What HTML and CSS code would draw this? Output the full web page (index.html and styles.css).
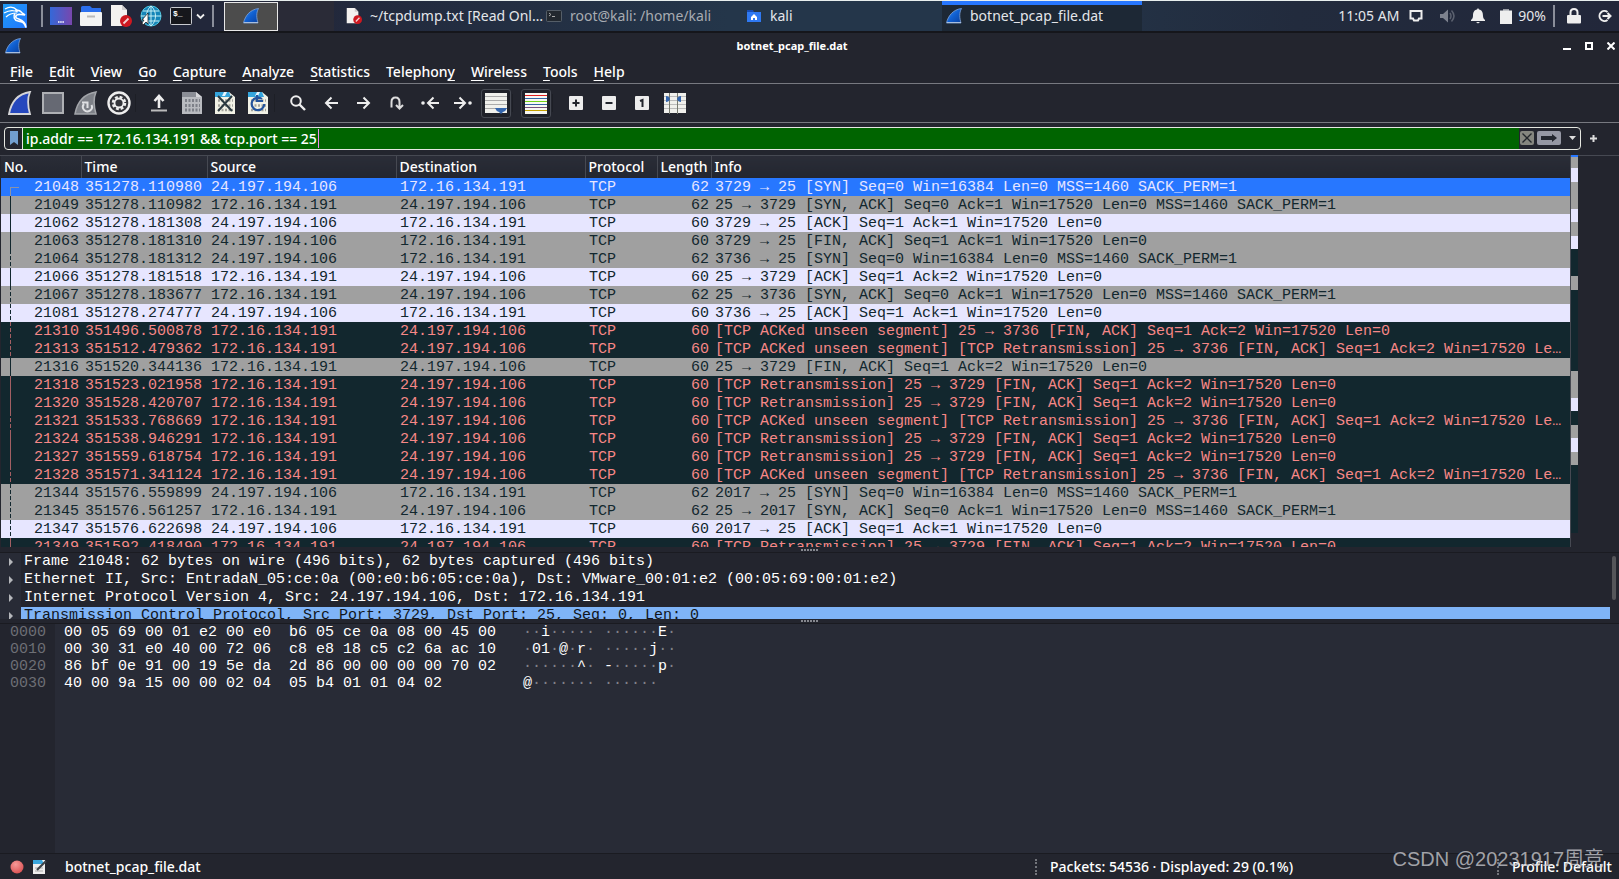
FILE: index.html
```html
<!DOCTYPE html>
<html lang="en">
<head>
<meta charset="utf-8">
<title>botnet_pcap_file.dat</title>
<link rel="stylesheet" href="styles.css">
</head>
<body>
<svg class="defs" aria-hidden="true">
  <defs>
    <linearGradient id="blue" x1="0" y1="0" x2="1" y2="1"><stop offset="0" stop-color="#3d8df0"/><stop offset=".5" stop-color="#0f5fd0"/><stop offset="1" stop-color="#0b3f9c"/></linearGradient>
    <linearGradient id="desk" x1="0" y1="0" x2="1" y2="0"><stop offset="0" stop-color="#3468d8"/><stop offset="1" stop-color="#7847ae"/></linearGradient>
    <linearGradient id="kali" x1="0" y1="0" x2="1" y2="1"><stop offset="0" stop-color="#1e9bf5"/><stop offset="1" stop-color="#2277ff"/></linearGradient>
    <radialGradient id="red" cx=".4" cy=".3" r=".8"><stop offset="0" stop-color="#f59a98"/><stop offset="1" stop-color="#d84a4c"/></radialGradient>
    <symbol id="fin" viewBox="0 0 16 16"><path d="M.5 15C2 8 7 1.500 15.500.500 13 5 13.500 10 15 15z" fill="url(#blue)" stroke="#7fa3d8" stroke-width=".8"/><path d="M1 14.500h14" stroke="#a9bedd"/></symbol>
    <symbol id="nofile" viewBox="0 0 22 22"><path d="M1 0h11l5 5v16H1z" fill="#f4f2f0"/><path d="M12 0v5h5z" fill="#d0cece"/><circle cx="16" cy="16" r="6" fill="#cf1820"/><path d="M13.500 18.500l5-5" stroke="#f3d2d2" stroke-width="1.800"/></symbol>
    <symbol id="page" viewBox="0 0 22 24"><path d="M1 1h14l6 5v17H1z" fill="#f2f2e6"/><path d="M1 1h14l2 5H1z" fill="#35a5dc"/><path d="M10 1h3L11 5H8z" fill="#e8f6ff"/><path d="M4 9.500h15M4 14.500h15M4 19h15" stroke="#a4a49c" stroke-width="2.500" stroke-dasharray="2 1.500"/></symbol>
  </defs>
</svg>

<header class="panel">
  <button class="kali" aria-label="Applications"><svg width="24" height="24" viewBox="0 0 24 24"><rect width="24" height="24" fill="url(#kali)"/><path d="M2 5c5-3 9-2 12 1M1 9c5-3 10-3 14-1M3 13c3-3 7-4 11-4" fill="none" stroke="#fff" stroke-width="1.200"/><path d="M12 6c4 0 6 1 7 3l3 2-4-.5c-3-.5-6 .5-5 3 1 2.500 9 .5 10 10-2-6-5-6-8-6.500-4-.8-5-5-3-7.500" fill="none" stroke="#fff" stroke-width="1.600"/></svg></button>
  <span class="divider"></span>
  <nav class="launchers" aria-label="Launchers">
    <button aria-label="Show desktop"><svg width="22" height="18"><rect width="22" height="18" fill="url(#desk)"/><path d="M8 15h6" stroke="#fff" stroke-width="1.500" stroke-dasharray="1.500 .7"/></svg></button>
    <button aria-label="Files"><svg width="22" height="20"><path d="M1 7V1.500Q1 0 2.500 0H10l2 2h8.500Q21 2 21 3v5z" fill="#2b6fee"/><rect y="6" width="22" height="14" rx="1" fill="#f3f3f3"/><path d="M7 10.500h8" stroke="#b9b9b9" stroke-width="2"/></svg></button>
    <button aria-label="Text editor"><svg width="22" height="22"><use href="#nofile"/></svg></button>
    <button aria-label="Web browser"><svg width="22" height="22" viewBox="0 0 22 22"><circle cx="11" cy="11" r="10" fill="#1585b8" stroke="#4fc8e2"/><path d="M1 11h20M3 6h16M3 16h16M11 1v20M11 1c-6 5-6 15 0 20M11 1c6 5 6 15 0 20" fill="none" stroke="#c4eff5"/><path d="M8 8v11l-2-2-3 3-1-2 2-3H2z" fill="#fff" stroke="#111" stroke-width=".7"/></svg></button>
    <button aria-label="Terminal"><svg width="22" height="18"><rect x=".5" y=".5" width="21" height="17" rx="1" fill="#16171c" stroke="#c9cbd0"/><text x="3" y="9" class="prompt">$_</text></svg></button>
  </nav>
  <button class="more" aria-label="More terminals"><svg width="9" height="7"><path d="M1 1.500l3.500 3.500L8 1.500" fill="none" stroke="#eee" stroke-width="1.800"/></svg></button>
  <span class="divider"></span>
  <button class="workspace" aria-label="Workspace 1"><svg width="16" height="16"><use href="#fin"/></svg></button>
  <span class="workspace-rest"></span>
  <nav class="tasks" aria-label="Windows">
    <button class="task"><svg width="16" height="16"><use href="#nofile"/></svg><span>~/tcpdump.txt [Read Onl…</span></button>
    <button class="task dim"><svg width="16" height="12"><rect x=".5" y=".5" width="15" height="11" rx="1" fill="#22282f" stroke="#555e68"/><path d="M3 3l2 1.500L3 6M6 6.500h3" fill="none" stroke="#aaa"/></svg><span>root@kali: /home/kali</span></button>
    <button class="task"><svg width="16" height="12"><path d="M1 2V0h6l1 2z" fill="#174cb5"/><path d="M1 2h14v10H1z" fill="#2f79f3"/><path d="M8 4l3 3v3H9V8H7v2H5V7z" fill="#fff"/></svg><span>kali</span></button>
    <button class="task active"><svg width="16" height="16"><use href="#fin"/></svg><span>botnet_pcap_file.dat</span></button>
  </nav>
  <div class="tray">
    <time>11:05 AM</time>
    <svg class="t-net" width="14" height="14"><path d="M1.500 2h11v7.500H10l-1 2H5l-1-2H1.500z" fill="none" stroke="#eee" stroke-width="2"/></svg>
    <svg class="t-vol" width="16" height="16"><path d="M0 6h3l5-4.500v13L3 10H0z" fill="#7d828e"/><path d="M10 5q2 3 0 6M11.500 2.500q5 5.500 0 11" fill="none" stroke="#5b616f" stroke-width="1.500"/></svg>
    <svg class="t-bell" width="14" height="16"><path d="M7 0l1 1.500c3 .5 4 3 4 6.500 0 2 1 3 2 4v1H0v-1c1-1 2-2 2-4 0-3.500 1-6 4-6.500zM5 14h4l-2 1.500z" fill="#eee"/></svg>
    <svg class="t-bat" width="12" height="16"><path d="M3 1h6v1.500h3V16H0V2.500h3z" fill="#eee"/><path d="M3 1h6v1.500H3z" fill="#999ca4"/></svg>
    <span class="pct">90%</span>
    <span class="divider"></span>
    <button class="t-lock" aria-label="Lock"><svg width="14" height="16"><path d="M3.500 8V4.500q0-3.500 3.500-3.500t3.500 3.500V8" fill="none" stroke="#eee" stroke-width="2"/><rect y="7" width="14" height="8.500" rx="1" fill="#eee"/></svg></button>
    <button aria-label="Log out"><svg width="15" height="14"><path d="M10.500 3A5 5 0 1 0 10.500 11M5.500 7h8M10.500 4l3 3-3 3" fill="none" stroke="#eee" stroke-width="2"/></svg></button>
  </div>
</header>

<main class="window">
  <div class="titlebar">
    <svg width="16" height="16"><use href="#fin"/></svg>
    <h1>botnet_pcap_file.dat</h1>
    <div class="controls">
      <button aria-label="Minimize"><svg width="8" height="8"><path d="M0 7h8" stroke="#fff" stroke-width="2"/></svg></button>
      <button aria-label="Maximize"><svg width="8" height="8"><rect x="1" y="1" width="6" height="6" fill="none" stroke="#fff" stroke-width="2"/></svg></button>
      <button aria-label="Close"><svg width="8" height="8"><path d="M.5.500l7 7M7.500.500l-7 7" stroke="#fff" stroke-width="2"/></svg></button>
    </div>
  </div>

  <nav class="menubar" aria-label="Menu">
    <button><u>F</u>ile</button><button><u>E</u>dit</button><button><u>V</u>iew</button><button><u>G</u>o</button><button><u>C</u>apture</button><button><u>A</u>nalyze</button><button><u>S</u>tatistics</button><button>Telephon<u>y</u></button><button><u>W</u>ireless</button><button><u>T</u>ools</button><button><u>H</u>elp</button>
  </nav>

  <div class="toolbar" role="toolbar" aria-label="Main toolbar">
    <button aria-label="Start capture"><svg width="24" height="24" viewBox="0 0 24 24"><path d="M1 23C3 12 9 3 22 1 19 8 20 16 22 23z" fill="#2547bd" stroke="#d5d5d8" stroke-width="1.800"/></svg></button>
    <button aria-label="Stop capture"><svg width="22" height="22"><rect x="1" y="1" width="20" height="20" fill="#666973" stroke="#aeb0b4" stroke-width="2"/></svg></button>
    <button aria-label="Restart capture"><svg width="24" height="24" viewBox="0 0 24 24"><path d="M1 23C3 12 9 3 22 1 19 8 20 16 22 23z" fill="#7d8087" stroke="#a3a5aa" stroke-width="1.500"/><path d="M10 13a4.500 4.500 0 1 0 7.500 1M8 11.500h5.500V17" fill="none" stroke="#dfe0e3" stroke-width="2"/></svg></button>
    <button aria-label="Capture options"><svg width="24" height="24" viewBox="0 0 24 24"><circle cx="12" cy="12" r="10.500" fill="#33343a" stroke="#eee" stroke-width="2.400"/><circle cx="12" cy="12" r="6" fill="none" stroke="#eee" stroke-width="2.500" stroke-dasharray="2.800 1.900"/><circle cx="12" cy="12" r="4.500" fill="#33343a" stroke="#eee" stroke-width="1.800"/></svg></button>
    <span class="sep"></span>
    <button aria-label="Open"><svg width="16" height="18"><path d="M8 14V3M3.500 7L8 2l4.500 5" fill="none" stroke="#eee" stroke-width="2.600"/><path d="M0 16.500h16" stroke="#bbb" stroke-width="2"/></svg></button>
    <button aria-label="Save"><svg width="22" height="24" viewBox="0 0 22 24"><path d="M1 1h14l6 5v17H1z" fill="#b9bbc0"/><path d="M1 1h14l2 5H1z" fill="#8b8e96"/><path d="M15 1v5h6z" fill="#d6d7da"/><path d="M4 9.500h15M4 14.500h15M4 19h15" stroke="#7d8088" stroke-width="3" stroke-dasharray="2 1.500"/></svg></button>
    <button aria-label="Close file"><svg width="22" height="24"><use href="#page"/><path d="M4 5l14 15M18 5L4 20" stroke="#2b3a40" stroke-width="2"/></svg></button>
    <button aria-label="Reload"><svg width="22" height="24"><use href="#page"/><path d="M15 8A6.300 6.300 0 1 0 17.300 13M10 4v6h6" fill="none" stroke="#24549c" stroke-width="2.200"/></svg></button>
    <span class="sep"></span>
    <button aria-label="Find"><svg width="16" height="16"><circle cx="6" cy="6" r="4.800" fill="none" stroke="#eee" stroke-width="2"/><path d="M9.500 9.500l5.500 5.500" stroke="#eee" stroke-width="2.400"/></svg></button>
    <button aria-label="Back"><svg width="14" height="14"><path d="M14 7H2M7.500 1.500L2 7l5.500 5.500" fill="none" stroke="#eee" stroke-width="2"/></svg></button>
    <button aria-label="Forward"><svg width="14" height="14"><path d="M0 7h12M6.500 1.500L12 7l-5.500 5.500" fill="none" stroke="#eee" stroke-width="2"/></svg></button>
    <button aria-label="Go to packet"><svg width="14" height="14"><path d="M1.500 11.500V6q0-4.500 4-4.500t4 4.500v6M6 9l3.500 3.500L13 9" fill="none" stroke="#ddd" stroke-width="2"/></svg></button>
    <button aria-label="First packet"><svg width="18" height="14"><circle cx="2" cy="7" r="1.800" fill="#eee"/><path d="M18 7H8M12.500 1.500L7 7l5.500 5.500" fill="none" stroke="#eee" stroke-width="2"/></svg></button>
    <button aria-label="Last packet"><svg width="18" height="14"><circle cx="16" cy="7" r="1.800" fill="#eee"/><path d="M0 7h10M5.500 1.500L11 7l-5.500 5.500" fill="none" stroke="#eee" stroke-width="2"/></svg></button>
    <button class="on" aria-label="Auto scroll"><svg width="22" height="21"><path d="M0 0h22v20H0z" fill="#f0f0ec"/><path d="M0 3.500h22M0 7.500h22M0 11.500h22M0 15.500h22" stroke="#aaa"/><path d="M10 15h12q-1 3-4 4l-2 2-2-2q-3-1-4-4z" fill="#3566ad"/></svg></button>
    <span class="sep"></span>
    <button class="on" aria-label="Colorize"><svg width="22" height="21"><path d="M0 0h22v21H0z" fill="#f7f7f3"/><path d="M0 2.500h22" stroke="#e02020"/><path d="M0 5.500h22M0 11.500h22" stroke="#3465a4"/><path d="M0 8.500h22" stroke="#73d216"/><path d="M0 14.500h22" stroke="#75507b"/><path d="M0 17.500h22" stroke="#c4a000"/></svg></button>
    <span class="sep"></span>
    <button aria-label="Zoom in"><svg width="14" height="14"><rect width="14" height="14" rx="1" fill="#ededed"/><path d="M7 3.500v7M3.500 7h7" stroke="#22252d" stroke-width="2"/></svg></button>
    <button aria-label="Zoom out"><svg width="14" height="14"><rect width="14" height="14" rx="1" fill="#ededed"/><path d="M3.500 7h7" stroke="#22252d" stroke-width="2"/></svg></button>
    <button aria-label="Normal size"><svg width="14" height="14"><rect width="14" height="14" rx="1" fill="#ededed"/><path d="M5 5l2.500-1v7" fill="none" stroke="#22252d" stroke-width="2"/></svg></button>
    <button aria-label="Resize columns"><svg width="22" height="21"><path d="M0 0h22v20H0z" fill="#f0f0ec"/><path d="M0 3.500h22M0 7.500h22M0 11.500h22M0 15.500h22" stroke="#bbb"/><path d="M5.500 0v21M13.500 0v21" stroke="#777a70"/><path d="M2 3q3 0 4 3-1 3-4 3zM17 3q-3 0-4 3 1 3 4 3z" fill="#3566ad"/></svg></button>
  </div>

  <form class="filter">
    <div class="filter-box">
      <button type="button" class="bookmark" aria-label="Bookmarks"><svg width="8" height="14"><path d="M0 0h8v14l-4-3-4 3z" fill="#729fcf"/></svg></button>
      <div class="field"><input type="text" aria-label="Display filter" value="ip.addr == 172.16.134.191 &amp;&amp; tcp.port == 25"><i class="caret"></i></div>
      <button type="button" class="clear" aria-label="Clear"><svg width="14" height="14"><rect width="14" height="14" rx="2" fill="#85867f"/><path d="M2.500 2.500l9 9M11.500 2.500l-9 9" stroke="#22262b" stroke-width="1.300"/></svg></button>
      <button type="button" class="apply" aria-label="Apply"><svg width="24" height="14"><rect width="24" height="14" rx="2" fill="#9597a3"/><path d="M4 5h11V3l5 4-5 4V9H4z" fill="#23262e"/></svg></button>
      <button type="button" class="drop" aria-label="Recent filters"><svg width="7" height="4"><path d="M0 0h7L3.500 4z" fill="#ddd"/></svg></button>
    </div>
    <button type="button" class="add" aria-label="Add filter button"><svg width="7" height="7"><path d="M3.500 0v7M0 3.500h7" stroke="#ddd" stroke-width="2"/></svg></button>
  </form>

  <section class="packets">
    <div class="list">
      <table>
        <colgroup><col class="c-no"><col class="c-time"><col class="c-addr"><col class="c-addr"><col class="c-proto"><col class="c-len"><col></colgroup>
        <thead><tr><th>No.</th><th>Time</th><th>Source</th><th>Destination</th><th>Protocol</th><th>Length</th><th>Info</th></tr></thead>
        <tbody>
          <tr class="sel first"><td>21048</td><td>351278.110980</td><td>24.197.194.106</td><td>172.16.134.191</td><td>TCP</td><td>62</td><td>3729 → 25 [SYN] Seq=0 Win=16384 Len=0 MSS=1460 SACK_PERM=1</td></tr>
          <tr class="gray"><td>21049</td><td>351278.110982</td><td>172.16.134.191</td><td>24.197.194.106</td><td>TCP</td><td>62</td><td>25 → 3729 [SYN, ACK] Seq=0 Ack=1 Win=17520 Len=0 MSS=1460 SACK_PERM=1</td></tr>
          <tr class="pale"><td>21062</td><td>351278.181308</td><td>24.197.194.106</td><td>172.16.134.191</td><td>TCP</td><td>60</td><td>3729 → 25 [ACK] Seq=1 Ack=1 Win=17520 Len=0</td></tr>
          <tr class="gray"><td>21063</td><td>351278.181310</td><td>24.197.194.106</td><td>172.16.134.191</td><td>TCP</td><td>60</td><td>3729 → 25 [FIN, ACK] Seq=1 Ack=1 Win=17520 Len=0</td></tr>
          <tr class="gray other"><td>21064</td><td>351278.181312</td><td>24.197.194.106</td><td>172.16.134.191</td><td>TCP</td><td>62</td><td>3736 → 25 [SYN] Seq=0 Win=16384 Len=0 MSS=1460 SACK_PERM=1</td></tr>
          <tr class="pale"><td>21066</td><td>351278.181518</td><td>172.16.134.191</td><td>24.197.194.106</td><td>TCP</td><td>60</td><td>25 → 3729 [ACK] Seq=1 Ack=2 Win=17520 Len=0</td></tr>
          <tr class="gray other"><td>21067</td><td>351278.183677</td><td>172.16.134.191</td><td>24.197.194.106</td><td>TCP</td><td>62</td><td>25 → 3736 [SYN, ACK] Seq=0 Ack=1 Win=17520 Len=0 MSS=1460 SACK_PERM=1</td></tr>
          <tr class="pale other"><td>21081</td><td>351278.274777</td><td>24.197.194.106</td><td>172.16.134.191</td><td>TCP</td><td>60</td><td>3736 → 25 [ACK] Seq=1 Ack=1 Win=17520 Len=0</td></tr>
          <tr class="bad other"><td>21310</td><td>351496.500878</td><td>172.16.134.191</td><td>24.197.194.106</td><td>TCP</td><td>60</td><td>[TCP ACKed unseen segment] 25 → 3736 [FIN, ACK] Seq=1 Ack=2 Win=17520 Len=0</td></tr>
          <tr class="bad other"><td>21313</td><td>351512.479362</td><td>172.16.134.191</td><td>24.197.194.106</td><td>TCP</td><td>60</td><td>[TCP ACKed unseen segment] [TCP Retransmission] 25 → 3736 [FIN, ACK] Seq=1 Ack=2 Win=17520 Len=0</td></tr>
          <tr class="gray"><td>21316</td><td>351520.344136</td><td>172.16.134.191</td><td>24.197.194.106</td><td>TCP</td><td>60</td><td>25 → 3729 [FIN, ACK] Seq=1 Ack=2 Win=17520 Len=0</td></tr>
          <tr class="bad"><td>21318</td><td>351523.021958</td><td>172.16.134.191</td><td>24.197.194.106</td><td>TCP</td><td>60</td><td>[TCP Retransmission] 25 → 3729 [FIN, ACK] Seq=1 Ack=2 Win=17520 Len=0</td></tr>
          <tr class="bad"><td>21320</td><td>351528.420707</td><td>172.16.134.191</td><td>24.197.194.106</td><td>TCP</td><td>60</td><td>[TCP Retransmission] 25 → 3729 [FIN, ACK] Seq=1 Ack=2 Win=17520 Len=0</td></tr>
          <tr class="bad other"><td>21321</td><td>351533.768669</td><td>172.16.134.191</td><td>24.197.194.106</td><td>TCP</td><td>60</td><td>[TCP ACKed unseen segment] [TCP Retransmission] 25 → 3736 [FIN, ACK] Seq=1 Ack=2 Win=17520 Len=0</td></tr>
          <tr class="bad"><td>21324</td><td>351538.946291</td><td>172.16.134.191</td><td>24.197.194.106</td><td>TCP</td><td>60</td><td>[TCP Retransmission] 25 → 3729 [FIN, ACK] Seq=1 Ack=2 Win=17520 Len=0</td></tr>
          <tr class="bad"><td>21327</td><td>351559.618754</td><td>172.16.134.191</td><td>24.197.194.106</td><td>TCP</td><td>60</td><td>[TCP Retransmission] 25 → 3729 [FIN, ACK] Seq=1 Ack=2 Win=17520 Len=0</td></tr>
          <tr class="bad other"><td>21328</td><td>351571.341124</td><td>172.16.134.191</td><td>24.197.194.106</td><td>TCP</td><td>60</td><td>[TCP ACKed unseen segment] [TCP Retransmission] 25 → 3736 [FIN, ACK] Seq=1 Ack=2 Win=17520 Len=0</td></tr>
          <tr class="gray other"><td>21344</td><td>351576.559899</td><td>24.197.194.106</td><td>172.16.134.191</td><td>TCP</td><td>62</td><td>2017 → 25 [SYN] Seq=0 Win=16384 Len=0 MSS=1460 SACK_PERM=1</td></tr>
          <tr class="gray other"><td>21345</td><td>351576.561257</td><td>172.16.134.191</td><td>24.197.194.106</td><td>TCP</td><td>62</td><td>25 → 2017 [SYN, ACK] Seq=0 Ack=1 Win=17520 Len=0 MSS=1460 SACK_PERM=1</td></tr>
          <tr class="pale other"><td>21347</td><td>351576.622698</td><td>24.197.194.106</td><td>172.16.134.191</td><td>TCP</td><td>60</td><td>2017 → 25 [ACK] Seq=1 Ack=1 Win=17520 Len=0</td></tr>
          <tr class="bad"><td>21349</td><td>351592.418490</td><td>172.16.134.191</td><td>24.197.194.106</td><td>TCP</td><td>60</td><td>[TCP Retransmission] 25 → 3729 [FIN, ACK] Seq=1 Ack=2 Win=17520 Len=0</td></tr>
        </tbody>
      </table>
    </div>
    <svg class="minimap" viewBox="0 0 7 391" preserveAspectRatio="none" aria-hidden="true">
      <path d="M0 0h7v378H0z" fill="#12272e"/>
      <path d="M0 0h7v2H0z" fill="#2777ff"/>
      <path d="M0 2h7v11H0zM0 27h7v27H0zM0 67h7v14H0zM0 121h7v14H0zM0 216h7v27H0zM0 270h7v13H0zM0 297h7v13H0z" fill="#a0a0a0"/>
      <path d="M0 13h7v14H0zM0 54h7v13H0zM0 81h7v13H0zM0 243h7v13H0zM0 283h7v14H0z" fill="#e7e6ff"/>
    </svg>
  </section>
  <div class="splitter"><i></i></div>

  <section class="details">
    <ul>
      <li>Frame 21048: 62 bytes on wire (496 bits), 62 bytes captured (496 bits)</li>
      <li>Ethernet II, Src: EntradaN_05:ce:0a (00:e0:b6:05:ce:0a), Dst: VMware_00:01:e2 (00:05:69:00:01:e2)</li>
      <li>Internet Protocol Version 4, Src: 24.197.194.106, Dst: 172.16.134.191</li>
      <li class="current">Transmission Control Protocol, Src Port: 3729, Dst Port: 25, Seq: 0, Len: 0</li>
    </ul>
    <div class="scroll"></div>
  </section>
  <div class="splitter"><i></i></div>

  <section class="bytes">
    <pre class="offsets">0000
0010
0020
0030</pre>
    <pre class="hex">00 05 69 00 01 e2 00 e0  b6 05 ce 0a 08 00 45 00
00 30 31 e0 40 00 72 06  c8 e8 18 c5 c2 6a ac 10
86 bf 0e 91 00 19 5e da  2d 86 00 00 00 00 70 02
40 00 9a 15 00 00 02 04  05 b4 01 01 04 02</pre>
    <pre class="ascii">··<b>i</b>····· ······<b>E</b>·
·<b>01</b>·<b>@</b>·<b>r</b>· ·····<b>j</b>··
······<b>^</b>· <b>-</b>·····<b>p</b>·
<b>@</b>······· ······</pre>
  </section>

  <footer class="status">
    <button aria-label="Expert information"><svg width="14" height="14"><circle cx="7" cy="7" r="6.500" fill="url(#red)"/></svg></button>
    <button aria-label="Capture comment"><svg width="14" height="14"><path d="M0 0h12v14H0z" fill="#eee"/><path d="M0 0h9l2 4H0z" fill="#3aa6dc"/><path d="M2 8h8M2 11h8" stroke="#aaa"/><path d="M4 10L13 1" stroke="#3d4248" stroke-width="2.200"/></svg></button>
    <span class="name">botnet_pcap_file.dat</span>
    <span class="counts">Packets: 54536 · Displayed: 29 (0.1%)</span>
    <button class="profile">Profile: Default</button>
  </footer>
</main>
<div class="watermark">CSDN @20231917周竞</div>
</body>
</html>
```
FILE: styles.css
```css
* { box-sizing: border-box; }
html, body { height: 100%; }
body {
  margin: 0;
  display: flex;
  flex-direction: column;
  overflow: hidden;
  position: relative;
  background: #23252e;
  color: #fff;
  font: 14px/18px "Noto Sans", sans-serif;
}
button { padding: 0; border: 0; background: none; color: inherit; font: inherit; }
svg { display: block; flex: none; }
.defs { position: absolute; width: 0; height: 0; }

/* desktop panel */
.panel {
  display: flex;
  align-items: center;
  flex: none;
  height: 33px;
  padding: 1px 7px 1px 3px;
  border-top: 1px solid #e8efee;
  border-bottom: 2px solid #15161b;
  background: linear-gradient(90deg, #22273a 0, #22273a 18%, #24364a 45%, #24364a 62%, #222b3d 80%, #22273a);
  color: #e4e6ea;
}
.divider { width: 2px; height: 22px; background: #8a8e9a; flex: none; }
.kali { margin-right: 14px; }
.launchers { display: flex; gap: 8px; margin: 0 4px 0 7px; }
.launchers button { width: 22px; height: 24px; display: grid; place-items: center; }
.prompt { font: bold 8px "Liberation Mono", monospace; fill: #fff; }
.more { margin-right: 7px; }
.workspace {
  display: grid;
  place-items: center;
  flex: none;
  width: 54px;
  height: 29px;
  margin-left: 10px;
  border: 1px solid #e8e8e8;
  background: #4c4c4c;
}
.workspace-rest { flex: none; width: 56px; height: 30px; margin-right: 8px; background: #2a2b37; }
.tasks { display: flex; flex: 0 1 800px; min-width: 0; align-self: stretch; margin: -1px 0; }
.task {
  display: flex;
  flex: 1 1 0;
  min-width: 0;
  align-items: center;
  gap: 8px;
  padding: 0 0 0 4px;
  text-align: left;
}
.task span { white-space: nowrap; }
.task.dim { color: #a8acb2; }
.task.active { background: #1d2835; box-shadow: inset 0 4px #2777ff; }
.tray { display: flex; align-items: center; margin-left: auto; white-space: nowrap; }
.t-net { margin-left: 10px; }
.t-vol { margin-left: 17px; }
.t-bell { margin-left: 15px; }
.t-bat { margin-left: 15px; }
.pct { margin: 0 7px 0 6px; }
.t-lock { margin: 0 16px 0 12px; }

/* window chrome */
.window { display: flex; flex-direction: column; flex: 1; min-height: 0; }
.titlebar {
  display: flex;
  align-items: center;
  height: 26px;
  padding: 0 4px 0 5px;
}
.titlebar h1 { flex: 1; margin: 0; font-size: 11px; line-height: 16px; font-weight: 700; text-align: center; }
.controls { display: flex; gap: 14px; }
.menubar {
  display: flex;
  gap: 16px;
  align-items: center;
  height: 25px;
  padding: 2px 10px 0;
  border-bottom: 1px solid #777980;
  font-weight: 500;
}
.menubar u { text-underline-offset: 3px; }
.toolbar {
  display: flex;
  align-items: center;
  height: 39px;
  padding: 0 3px;
  border-bottom: 1px solid #777980;
}
.toolbar button { display: grid; place-items: center; width: 33px; height: 29px; }
.toolbar .on { width: 30px; margin: 0 1px 0 2px; border: 1px solid #464952; border-radius: 3px; background: #1f2129; }
.toolbar .sep { width: 7px; height: 18px; border-left: 1px solid #1d1f26; }

/* display filter */
.filter { display: flex; align-items: center; height: 32px; padding: 0 22px 2px 4px; font-weight: 500; }
.filter-box {
  display: flex;
  align-items: center;
  flex: 1;
  height: 23px;
  border: 1px solid #e6e8e2;
  border-radius: 4px;
  overflow: hidden;
}
.bookmark { display: grid; place-items: center; width: 18px; height: 21px; border-right: 1px solid #e6e8e2; }
.field { position: relative; flex: 1; height: 21px; }
.field input {
  display: block;
  width: 100%;
  height: 21px;
  padding: 0 3px;
  border: 0;
  outline: 0;
  background: #006400;
  color: #fff;
  font: inherit;
}
.caret { position: absolute; top: 1px; left: 295px; width: 1px; height: 19px; background: #f08cf0; }
.clear { margin: 0 3px 0 1px; }
.drop { margin: 0 4px 0 8px; }
.add { margin-left: 9px; }

/* packet list */
.packets { display: flex; flex: none; height: 392px; margin-bottom: 1px; padding-right: 41px; border-top: 1px solid #464952; }
.list { flex: 1; min-width: 0; height: 391px; overflow: hidden; padding-left: 1px; border-right: 1px solid #464952; }
.minimap { width: 7px; height: 391px; margin-top: -1px; }
table { width: 100%; table-layout: fixed; border-collapse: collapse; }
.c-no { width: 80px; }
.c-time { width: 126px; }
.c-addr { width: 189px; }
.c-proto { width: 72px; }
.c-len { width: 54px; }
th {
  height: 22px;
  padding: 0 0 0 3px;
  border-right: 1px solid #464952;
  background: linear-gradient(#2a2d37, #23262f);
  font-weight: 500;
  line-height: 20px;
  text-align: left;
}
th:last-child { border-right: 0; }
td {
  height: 18px;
  padding: 1px 4px 0;
  overflow: hidden;
  text-overflow: ellipsis;
  white-space: nowrap;
  font: 15px/17px "Liberation Mono", monospace;
}
td:nth-child(1), td:nth-child(6) { padding: 1px 2px 0; text-align: right; }
tr { --thread: #12272e; }
.bad { --thread: #a35f63; }
td:first-child {
  background: linear-gradient(var(--thread), var(--thread)) 9px 0 / 1px 100% no-repeat;
}
.other td:first-child {
  background: repeating-linear-gradient(var(--thread) 0 4px, transparent 4px 6px) 9px 0 / 1px 100% no-repeat;
}
.first td:first-child {
  background:
    linear-gradient(#8a93a8, #8a93a8) 9px 9px / 9px 1px no-repeat,
    linear-gradient(#8a93a8, #8a93a8) 9px 9px / 1px 9px no-repeat;
}
.sel { background: #2777ff; color: #e7e6ff; }
.gray { background: #a0a0a0; color: #12272e; }
.pale { background: #e7e6ff; color: #12272e; }
.bad { background: #12272e; color: #f78787; }

.splitter { display: grid; place-items: center; flex: none; height: 5px; border-bottom: 1px solid #1a1b21; }
.splitter i { width: 18px; height: 2px; background: repeating-linear-gradient(90deg, #85878e 0 2px, transparent 2px 3px); }

/* packet details */
.details { display: flex; flex: none; height: 66px; overflow: hidden; padding-right: 3px; font: 15px/18px "Liberation Mono", monospace; }
.details ul { flex: 1; margin: 0; padding: 0 0 0 21px; list-style: none; background: linear-gradient(90deg, #282b36 21px, transparent 21px); }
.details li { position: relative; padding-left: 3px; }
.details li::before {
  content: "";
  position: absolute;
  left: -12px;
  top: 5px;
  border: 4px solid transparent;
  border-left-color: #b5b7bb;
  border-right: 0;
}
.details .current { background: #7fb4f7; color: #12161c; }
.scroll { width: 4px; height: 44px; margin: 3px 0 0 2px; border-radius: 2px; background: #55565a; }

/* packet bytes */
.bytes { display: flex; flex: 1; min-height: 0; background: #282b36; border-bottom: 1px solid #1a1b21; }
pre { margin: 0; font: 15px/17px "Liberation Mono", monospace; }
.offsets { width: 55px; padding-left: 10px; background: #23252e; color: #6d6f75; }
.hex { padding-left: 9px; width: 468px; }
.ascii { color: #808288; }
.ascii b { color: #fff; font-weight: 400; }

/* status bar */
.status { display: flex; align-items: center; flex: none; height: 25px; padding-left: 10px; font-weight: 500; }
.status button:nth-child(2) { margin: 0 18px 0 9px; }
.name { flex: 1; }
.counts, .profile { border-left: 2px dotted #73757b; padding-left: 13px; text-align: left; line-height: 16px; }
.counts { width: 462px; }
.profile { width: 122px; font-weight: 500; }
.watermark {
  position: absolute;
  right: 15px;
  bottom: 7px;
  font: 20px/26px "Liberation Sans", "Noto Sans CJK SC", sans-serif;
  color: rgba(205, 205, 210, .75);
}
```
